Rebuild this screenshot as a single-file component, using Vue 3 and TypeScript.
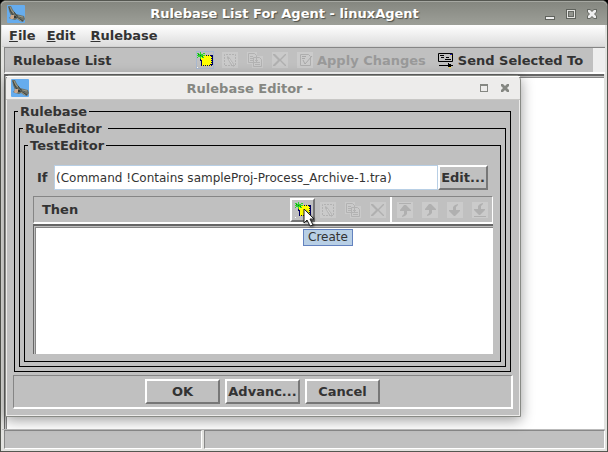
<script setup lang="ts">
import { ref } from 'vue'

interface Tool {
  icon: string
  label: string
}

const menus = ['File', 'Edit', 'Rulebase']
const editTools: Tool[] = [
  { icon: 'edit', label: 'Edit' },
  { icon: 'copy', label: 'Copy' },
  { icon: 'delete', label: 'Delete' },
]
const moveTools: Tool[] = [
  { icon: 'top', label: 'Move to top' },
  { icon: 'up', label: 'Move up' },
  { icon: 'down', label: 'Move down' },
  { icon: 'bottom', label: 'Move to bottom' },
]
const dialogActions = ['OK', 'Advanc...', 'Cancel']
const condition = ref('(Command !Contains sampleProj-Process_Archive-1.tra)')
</script>

<template>
  <svg class="defs" aria-hidden="true" shape-rendering="crispEdges">
    <symbol id="eagle" viewBox="0 0 18 18" shape-rendering="auto">
      <rect width="18" height="18" rx="1" fill="#66aced" />
      <path d="M1 1h3l2 4 3 4 4 1 4 1 1 3-2 3-3-1-3-2-2 1-4-1-2-1 2-2-2-5z" fill="#6c7068" />
      <path d="M2 2l2 5 2 3 3 2M9 12l4 2 3 2M7 7l3 4 4 1" stroke="#3f4644" fill="none" />
      <path d="M3 2l2 4 2 2M11 11l5 1M10 13l4 3" stroke="#9a9884" fill="none" />
      <path d="M4 10h3l1 2-2 2H4l-1-1z" fill="#caa78c" />
      <path d="M7 11h2v2H7z" fill="#343936" />
    </symbol>
    <symbol id="create" viewBox="0 0 16 16">
      <path d="M3 3h13v10h-1v1H4V9H3z" fill="#000060" />
      <path d="M4 4h10v8h-1v1H5V8H4z" fill="#ff0" />
      <path d="M6 3.500h8M14.500 5v8M5 13.500h9" stroke="#ff0" stroke-dasharray="1 1" />
      <path d="M0 1h2v1h1V0h1v2h2V1h2v1H6v1h2v1H5v1h2v1H5V5H4v2H3V5H1v1H0V5h1V4H0V3h2V2H0z" fill="#2bd62b" />
      <path d="M3 3h1v1H3zM1 2h1v1H1zM5 4h1v1H5z" fill="#087f12" />
      <path d="M0 15h1v1H0z" fill="#fff" />
    </symbol>
    <symbol id="edit" viewBox="0 0 16 16">
      <rect width="16" height="16" fill="#cacaca" />
      <path d="M2.500 13V2.500h11V13M3 13.500h10" stroke="#b2b2b2" fill="none" stroke-dasharray="2 1" />
      <path d="M5 4l2 1 5 7v3l-3-2-4-7z" fill="#b4b4b4" />
      <path d="M7 7l4 6" stroke="#d6d6d6" />
    </symbol>
    <symbol id="copy" viewBox="0 0 16 16">
      <path d="M0 0h10v4h6v12H5v-4H0z" fill="#cacaca" />
      <path d="M1.500 1.500h6l2 2v7h-8zM6.500 5.500h6l2 2v7h-8z" stroke="#b2b2b2" fill="#cacaca" />
      <path d="M3 4.500h3M3 6.500h3M3 8.500h3M8 8.500h3M8 10.500h5M8 12.500h5" stroke="#b2b2b2" />
    </symbol>
    <symbol id="delete" viewBox="0 0 16 16">
      <rect width="16" height="16" fill="#cacaca" />
      <path d="M1 2h2l5 5 5-5h1v1L9 8l5 5v1h-1L8 9l-5 5H1v-1l5-5-5-5z" fill="#b0b0b0" />
    </symbol>
    <symbol id="apply" viewBox="0 0 16 16">
      <rect width="16" height="16" fill="#cbcbcb" />
      <path d="M3.500 2.500h8l2 2v9h-10z" stroke="#aeaeae" fill="none" />
      <path d="M5 4.500h4M5 6.500h3M6 8l2 4 7-8" stroke="#a8a8a8" fill="none" />
    </symbol>
    <symbol id="send" viewBox="0 0 16 16">
      <path d="M.5 1.500h14v8H.5z" stroke="#000" fill="none" />
      <path d="M2 3.500h4M3 5.500h3M8 5.500h3M7 7.500h6M1 13.500h10" stroke="#000" />
      <path d="M10 11h1v1h2v1h2v1h-2v1h-3z" fill="#000" />
      <path d="M12 2h2v2h-1V3h-1z" fill="#1c1cbb" />
      <path d="M13 3h1v1h-1zM11 15h2v1h-2z" fill="#ffe13b" />
    </symbol>
    <symbol id="up" viewBox="0 0 16 16">
      <rect width="16" height="16" fill="#cbcbcb" />
      <path d="M7 2h2l5 5v1h-4v3l-2 2-3 1v-1l2-2V8H3V7z" fill="#b0b0b0" />
    </symbol>
    <symbol id="top" viewBox="0 0 16 16">
      <rect width="16" height="16" fill="#cbcbcb" />
      <path d="M2 1h12v1H2zM7 3h2l5 5v1h-4v3l-2 2-3 1v-1l2-2V9H3V8z" fill="#b0b0b0" />
    </symbol>
    <symbol id="down" viewBox="0 0 16 16">
      <rect width="16" height="16" fill="#cbcbcb" />
      <path d="M11 2v1L9 5v3h4v1l-5 5H7L2 9V8h4V5l2-2z" fill="#b0b0b0" />
    </symbol>
    <symbol id="bottom" viewBox="0 0 16 16">
      <rect width="16" height="16" fill="#cbcbcb" />
      <path d="M11 1v1L9 4v3h4v1l-5 5H7L2 8V7h4V4l2-2zM2 14h12v1H2z" fill="#b0b0b0" />
    </symbol>
    <symbol id="minimize" viewBox="0 0 12 12">
      <path d="M1 8h10v4H1z" fill="#5f625c" />
      <path d="M2 9h8v2H2z" fill="#eee" />
    </symbol>
    <symbol id="maximize" viewBox="0 0 12 12">
      <path d="M1 1h10v10H1z" fill="#5f625c" />
      <path d="M2 2h8v8H2z" fill="#e5e5e2" />
      <path d="M3 3h6v6H3z" fill="#666963" />
      <path d="M4 4h4v4H4z" fill="#92948e" />
    </symbol>
    <symbol id="close" viewBox="0 0 12 12">
      <path d="M1 1h3l2 2 2-2h3v3L9 6l2 2v3H8L6 9l-2 2H1V8l2-2-2-2z" fill="#666963" />
      <path d="M2 2h2l2 2 2-2h2v2L8 6l2 2v2H8L6 8l-2 2H2V8l2-2-2-2z" fill="#eee" />
    </symbol>
  </svg>

  <main class="window">
    <header class="titlebar">
      <svg class="logo"><use href="#eagle" /></svg>
      <h1>Rulebase List For Agent - linuxAgent</h1>
      <div class="controls">
        <button aria-label="Minimize"><svg><use href="#minimize" /></svg></button>
        <button aria-label="Maximize"><svg><use href="#maximize" /></svg></button>
        <button aria-label="Close"><svg><use href="#close" /></svg></button>
      </div>
    </header>

    <nav class="menubar">
      <button v-for="menu in menus" :key="menu"><u>{{ menu.charAt(0) }}</u>{{ menu.slice(1) }}</button>
    </nav>

    <div class="toolbar">
      <span class="toolbar-name">Rulebase List</span>
      <button class="tool outlined" aria-label="Create"><svg><use href="#create" /></svg></button>
      <button v-for="tool in editTools" :key="tool.icon" class="tool" :aria-label="tool.label" disabled>
        <svg><use :href="`#${tool.icon}`" /></svg>
      </button>
      <button class="text-tool" disabled><svg><use href="#apply" /></svg>Apply Changes</button>
      <button class="text-tool send"><svg><use href="#send" /></svg>Send Selected To</button>
    </div>

    <section class="list-pane"></section>
    <footer class="status"><div></div><div></div></footer>
  </main>

  <section class="dialog" role="dialog" aria-labelledby="dialog-title">
    <header class="dialog-title">
      <svg class="logo"><use href="#eagle" /></svg>
      <h2 id="dialog-title">Rulebase Editor -</h2>
      <div class="controls">
        <button aria-label="Maximize">
          <svg viewBox="0 0 12 12"><path d="M2 2h8v8H2zM3 4v5h6V4z" fill="#858782" fill-rule="evenodd" /></svg>
        </button>
        <button aria-label="Close">
          <svg viewBox="0 0 12 12"><path d="M2 2h2l2 2 2-2h2v2L8 6l2 2v2H8L6 8l-2 2H2V8l2-2-2-2z" fill="#858782" /></svg>
        </button>
      </div>
    </header>

    <div class="dialog-body">
      <fieldset>
        <legend>Rulebase</legend>
        <fieldset>
          <legend class="wide">RuleEditor</legend>
          <fieldset class="test">
            <legend>TestEditor</legend>
            <div class="condition">
              <label for="condition">If</label>
              <input id="condition" v-model="condition" type="text" spellcheck="false" />
              <button class="push">Edit...</button>
            </div>
            <div class="then-bar">
              <span class="then-name">Then</span>
              <div class="create-wrap">
                <button class="tool raised" aria-describedby="create-tip" aria-label="Create">
                  <svg><use href="#create" /></svg>
                </button>
                <svg class="cursor" viewBox="0 0 12 19">
                  <path d="M1 1v14l3-3 3 6 3-1-3-6h4z" fill="#fff" stroke="#222" />
                </svg>
                <span id="create-tip" class="tooltip" role="tooltip">Create</span>
              </div>
              <button v-for="tool in editTools" :key="tool.icon" class="tool" :aria-label="tool.label" disabled>
                <svg><use :href="`#${tool.icon}`" /></svg>
              </button>
              <i class="divider"></i>
              <button v-for="tool in moveTools" :key="tool.icon" class="tool" :aria-label="tool.label" disabled>
                <svg><use :href="`#${tool.icon}`" /></svg>
              </button>
            </div>
            <div class="actions-list"></div>
          </fieldset>
        </fieldset>
      </fieldset>
      <div class="dialog-actions">
        <button v-for="action in dialogActions" :key="action" class="push">{{ action }}</button>
      </div>
    </div>
  </section>
</template>

<style>
body {
  background: #000;
}
</style>

<style scoped>
* {
  box-sizing: border-box;
}
.defs {
  position: absolute;
  width: 0;
  height: 0;
}
.window,
.dialog {
  font: bold 13px/17px "DejaVu Sans", sans-serif;
  color: #333;
}
button {
  font: inherit;
  color: inherit;
  background: none;
  border: 0;
  padding: 0;
  white-space: nowrap;
}
h1,
h2 {
  flex: 1;
  margin: 0;
  font: inherit;
  text-align: center;
  white-space: nowrap;
}
.window {
  display: flex;
  flex-direction: column;
  min-height: 100vh;
  padding: 0 2px 2px 1px;
  border: 1px solid #555751;
  border-radius: 6px 6px 0 0;
  background: #e2e2df;
}
.titlebar {
  display: flex;
  align-items: center;
  height: 24px;
  margin: 0 -2px 0 -1px;
  padding: 0 9px 0 6px;
  border-top: 1px solid #a6a8a2;
  border-radius: 5px 5px 0 0;
  background: linear-gradient(#858780, #9d9f98);
  color: #fff;
  text-shadow: 1px 1px 1px #4d4f49;
}
.logo {
  width: 18px;
  height: 18px;
}
.controls {
  display: flex;
  gap: 9px;
}
.controls button,
.controls svg {
  display: block;
  width: 12px;
  height: 12px;
}
.menubar {
  display: flex;
  gap: 11px;
  height: 22px;
  padding: 0 7px;
  border-bottom: 1px solid #d2d2d2;
  background: linear-gradient(#fff, #dcdcdc);
}
.menubar button:last-child {
  margin-left: 4px;
}
.toolbar {
  display: flex;
  align-items: center;
  height: 27px;
  margin-left: 2px;
  padding-left: 8px;
  border-top: 1px solid #858585;
  border-left: 1px solid #858585;
  border-bottom: 2px solid #fff;
  background: linear-gradient(90deg, #c0c0c0 calc(100% - 12px), #eee calc(100% - 12px));
}
.toolbar-name {
  flex: 0 0 179px;
}
.tool {
  display: grid;
  place-items: center;
  flex: none;
  width: 25px;
  height: 24px;
}
.tool svg,
.text-tool svg {
  display: block;
  width: 16px;
  height: 16px;
}
.outlined svg {
  outline: 1px solid #a9b8cf;
}
.text-tool {
  display: flex;
  align-items: center;
  gap: 4px;
  margin-left: 5px;
}
.text-tool:disabled {
  color: #999;
}
.send {
  margin-left: 12px;
}
.list-pane,
.actions-list {
  border-top: 2px solid #666;
  border-left: 1px solid #666;
  background: #fff;
  box-shadow: inset 1px 1px #c0c0c0, inset 2px 2px #858585;
}
.list-pane {
  flex: 1;
  margin: 0 1px 0 2px;
}
.status {
  display: grid;
  grid-template-columns: 33% 1fr;
  gap: 2px;
  height: 20px;
  padding-left: 2px;
  border-top: 1px solid #bbb;
}
.status div {
  border: 1px solid #888;
  border-right-color: #fff;
  border-bottom-color: #fff;
  background: #c0c0c0;
}

/* Editor window floating over the list window */
.dialog {
  position: absolute;
  top: 75px;
  left: 5px;
  width: 516px;
  border: 1px solid #888a85;
  border-radius: 5px 5px 0 0;
  background: #edeceb;
  box-shadow: 0 3px 14px rgba(0, 0, 0, 0.4);
}
.dialog-title {
  display: flex;
  align-items: center;
  height: 24px;
  padding: 0 9px 0 5px;
  border-top: 1px solid #fff;
  border-bottom: 1px solid #c8c7c5;
  color: #858782;
}
.dialog-title h2 {
  padding-right: 8px;
}
.dialog-body {
  margin: 0 1px 1px;
  padding: 3px 6px 6px;
  background: #c0c0c0;
}
fieldset {
  min-width: 0;
  margin: 0;
  padding: 0 4px 4px;
  border: 1px solid #000;
}
.dialog-body > fieldset {
  margin: 0 2px 3px 1px;
}
legend {
  margin-left: -1px;
  padding: 0 2px;
}
.wide {
  padding-right: 6px;
}
.test {
  padding: 11px 7px 7px 8px;
}
.test legend {
  margin-left: -5px;
}
.condition {
  display: flex;
  height: 25px;
  line-height: 25px;
}
.condition label {
  flex: 0 0 21px;
  padding-left: 4px;
}
.condition input {
  flex: 1;
  min-width: 0;
  margin: 0;
  padding: 0 1px;
  border: 1px solid #b8cfe5;
  border-radius: 0;
  background: #fff;
  color: #333;
  font: 12px "DejaVu Sans", sans-serif;
}
.push {
  width: 75px;
  height: 25px;
  border: solid;
  border-width: 2px;
  border-color: #fff #777 #777 #fff;
  line-height: 20px;
  text-align: center;
}
.condition .push {
  width: 50px;
  margin-right: 5px;
}
.then-bar {
  display: flex;
  align-items: center;
  height: 28px;
  margin-top: 6px;
  border: 1px solid #858585;
  border-right-color: #fff;
  border-bottom: 2px solid #fff;
}
.then-name {
  flex: 1;
  padding-left: 8px;
}
.create-wrap {
  position: relative;
}
.raised {
  border: 2px solid;
  border-color: #fff #777 #777 #fff;
}
.cursor {
  position: absolute;
  top: 10px;
  left: 13px;
  width: 12px;
  height: 19px;
  filter: drop-shadow(1px 1px 1px rgba(0, 0, 0, 0.5));
}
.tooltip {
  position: absolute;
  top: 31px;
  left: 13px;
  padding: 0 4px;
  border: 1px solid #6382bf;
  background: #b8cfe5;
  font-weight: normal;
  font-size: 12px;
  line-height: 15px;
}
.divider {
  width: 2px;
  height: 25px;
  background: #fff;
}
.actions-list {
  height: 130px;
}
.dialog-actions {
  display: flex;
  justify-content: center;
  gap: 5px;
  height: 34px;
  padding-top: 3px;
  border: 1px solid #858585;
  border-right: 2px solid #fff;
  border-bottom: 2px solid #fff;
}
</style>
